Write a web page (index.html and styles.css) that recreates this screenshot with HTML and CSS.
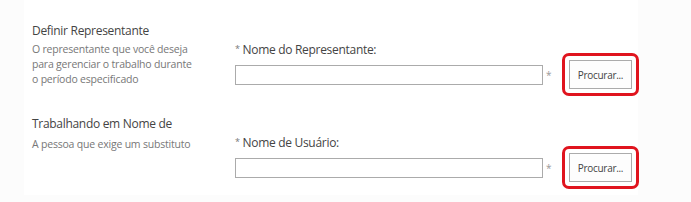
FILE: index.html
```html
<!DOCTYPE html>
<html lang="pt-BR">
<head>
    <meta charset="UTF-8">
    <title>Definir Representante</title>
    <link rel="stylesheet" href="styles.css">
</head>
<body>
    <div class="panel">
        <section class="row">
            <div class="info">
                <h3 class="info-title">Definir Representante</h3>
                <p class="info-desc">O representante que você deseja para gerenciar o trabalho durante o período especificado</p>
            </div>
            <div class="field">
                <label class="field-label"><span class="star">*</span> Nome do Representante:</label>
                <div class="input-line">
                    <input type="text" class="text-input">
                    <span class="req">*</span>
                    <span class="highlight"><button class="browse-btn">Procurar...</button></span>
                </div>
            </div>
        </section>

        <section class="row">
            <div class="info">
                <h3 class="info-title">Trabalhando em Nome de</h3>
                <p class="info-desc second">A pessoa que exige um substituto</p>
            </div>
            <div class="field">
                <label class="field-label"><span class="star">*</span> Nome de Usuário:</label>
                <div class="input-line">
                    <input type="text" class="text-input">
                    <span class="req">*</span>
                    <span class="highlight"><button class="browse-btn">Procurar...</button></span>
                </div>
            </div>
        </section>
    </div>
</body>
</html>
```

FILE: styles.css
```css
* {
    margin: 0;
    padding: 0;
    box-sizing: border-box;
}

body {
    background-color: #fcfcfc;
    font-family: "Open Sans", "Noto Sans", sans-serif;
    color: #444444;
    width: 691px;
    height: 202px;
    overflow: hidden;
}

.panel {
    margin-left: 24px;
    width: 614px;
    padding: 22px 0 13px 8px;
    background-color: #ffffff;
}

.row {
    display: flex;
    margin-bottom: 26px;
}

.row:last-child {
    margin-bottom: 0;
}

.info {
    width: 203px;
}

.info-title {
    font-size: 12px;
    line-height: 18px;
    letter-spacing: -0.3px;
    font-weight: normal;
    color: #444444;
}

.info-desc {
    width: 165px;
    margin-top: 2px;
    font-size: 10.5px;
    line-height: 15px;
    letter-spacing: -0.2px;
    color: #777777;
}

.info-desc.second {
    width: auto;
    margin-top: 4px;
}

.field {
    padding-top: 18px;
}

.field-label {
    display: block;
    font-size: 12px;
    line-height: 18px;
    letter-spacing: -0.3px;
    margin-bottom: 1px;
    color: #444444;
}

.star {
    font-size: 9px;
    color: #777777;
    vertical-align: 2px;
}

.input-line {
    display: flex;
    align-items: center;
    height: 29px;
}

.text-input {
    width: 308px;
    height: 20px;
    border: 1px solid #ababab;
    background-color: #ffffff;
}

.req {
    width: 26px;
    padding-left: 3px;
    font-size: 10px;
    color: #999999;
    align-self: flex-start;
    margin-top: 8px;
}

.highlight {
    margin: -7px;
    padding: 4px;
    border: 3px solid #e0141e;
    border-radius: 7px;
    display: flex;
}

.browse-btn {
    width: 63px;
    height: 29px;
    border: 1px solid #ababab;
    background-color: #fdfdfd;
    font-family: "Open Sans", "Noto Sans", sans-serif;
    font-size: 10px;
    letter-spacing: -0.3px;
    color: #444444;
}
```
